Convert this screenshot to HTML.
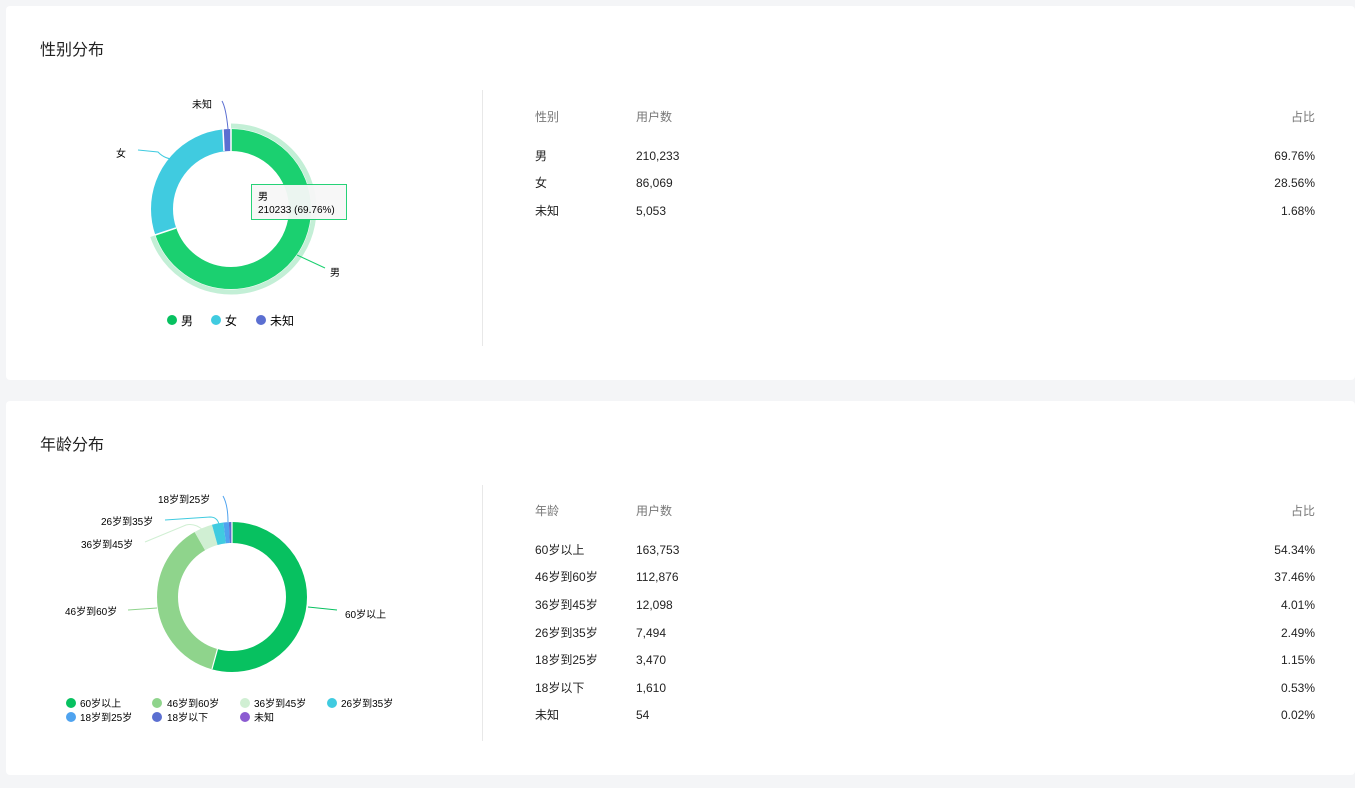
<!DOCTYPE html><html><head><meta charset="utf-8"><style>
body{margin:0;background:#f4f5f7;font-family:"Liberation Sans","Noto Sans CJK SC",sans-serif;width:1355px;height:788px;overflow:hidden;position:relative;color:#222}
.card{position:absolute;left:6px;width:1349px;background:#fff;border-radius:4px}
.t{position:absolute;font-size:12px;white-space:nowrap;line-height:16px;height:16px}
.h{color:#777}
.r{text-align:right}
.ttl{position:absolute;left:34px;font-size:16px;color:#222;line-height:22px}
.div{position:absolute;left:476px;width:1px;background:#e8e8e8}
svg{position:absolute;left:0;top:0}
</style></head><body>
<div class="card" style="top:6px;height:374px">
<div class="ttl" style="top:34px">性别分布</div>
<div class="div" style="top:84px;height:256px"></div>
</div>
<div class="card" style="top:401px;height:374px">
<div class="ttl" style="top:34px">年龄分布</div>
<div class="div" style="top:84px;height:256px"></div>
</div>
<svg width="1355" height="788" font-family="Liberation Sans, Noto Sans CJK SC, sans-serif">
<g transform="rotate(-90 231 209)" fill="none">
<circle cx="231" cy="209" r="83" stroke="#c3efd6" stroke-width="5" pathLength="100" stroke-dasharray="69.76 100"/>
<circle cx="231" cy="209" r="69" stroke="#1bd070" stroke-width="22" pathLength="100" stroke-dasharray="69.76 100"/>
<circle cx="231" cy="209" r="69" stroke="#40cbe0" stroke-width="22" pathLength="100" stroke-dasharray="0 69.76 28.56 100"/>
<circle cx="231" cy="209" r="69" stroke="#5b6fd1" stroke-width="22" pathLength="100" stroke-dasharray="0 98.32 1.68 100"/>
</g>
<path d="M231 129 V151 M223 129 L224 151 M176 228 L155 235" stroke="#fff" stroke-width="1.5"/>
<path d="M195 155 Q170 165 158 152 L138 150" stroke="#40cbe0" fill="none"/>
<path d="M228 129 Q226 108 222 101" stroke="#5b6fd1" fill="none"/>
<path d="M297 255 L325 268" stroke="#1bd070" fill="none"/>
<text x="192" y="108" font-size="10">未知</text>
<text x="116" y="157" font-size="10">女</text>
<text x="330" y="276" font-size="10">男</text>
<rect x="251.5" y="184.5" width="95" height="35" fill="#f7f7f7" stroke="#1bd070" opacity=".95"/>
<text x="258" y="200" font-size="10">男</text>
<text x="258" y="213" font-size="10">210233 (69.76%)</text>
<circle cx="172" cy="320" r="5" fill="#07c160"/><text x="181" y="325" font-size="12">男</text>
<circle cx="216" cy="320" r="5" fill="#40cbe0"/><text x="225" y="325" font-size="12">女</text>
<circle cx="261" cy="320" r="5" fill="#5b6fd1"/><text x="270" y="325" font-size="12">未知</text>

<g transform="rotate(-90 232 597)" fill="none" stroke-width="21">
<circle cx="232" cy="597" r="64.5" stroke="#07c160" pathLength="100" stroke-dasharray="54.34 100"/>
<circle cx="232" cy="597" r="64.5" stroke="#8fd48c" pathLength="100" stroke-dasharray="0 54.34 37.46 100"/>
<circle cx="232" cy="597" r="64.5" stroke="#d0efd3" pathLength="100" stroke-dasharray="0 91.8 4.01 100"/>
<circle cx="232" cy="597" r="64.5" stroke="#40cbe0" pathLength="100" stroke-dasharray="0 95.81 2.49 100"/>
<circle cx="232" cy="597" r="64.5" stroke="#4fa3ef" pathLength="100" stroke-dasharray="0 98.3 1.15 100"/>
<circle cx="232" cy="597" r="64.5" stroke="#5b6fd1" pathLength="100" stroke-dasharray="0 99.45 0.55 100"/>
</g>
<path d="M232 522 V544 M217.5 649 L212 669" stroke="#fff" stroke-width="1.2"/>
<path d="M308 607 L337 610" stroke="#07c160" fill="none"/>
<path d="M157 608 L128 610" stroke="#8fd48c" fill="none"/>
<path d="M203 530 Q195 523 186 525 L145 542" stroke="#d0efd3" fill="none"/>
<path d="M219 524 Q217 517 210 517 L165 520" stroke="#40cbe0" fill="none"/>
<path d="M228 522 Q228 505 223 496" stroke="#4fa3ef" fill="none"/>
<g font-size="10">
<text x="158" y="503">18岁到25岁</text>
<text x="101" y="525">26岁到35岁</text>
<text x="81" y="548">36岁到45岁</text>
<text x="65" y="615">46岁到60岁</text>
<text x="345" y="618">60岁以上</text>
<circle cx="71" cy="703" r="5" fill="#07c160"/><text x="80" y="707">60岁以上</text>
<circle cx="157" cy="703" r="5" fill="#8fd48c"/><text x="167" y="707">46岁到60岁</text>
<circle cx="245" cy="703" r="5" fill="#d0efd3"/><text x="254" y="707">36岁到45岁</text>
<circle cx="332" cy="703" r="5" fill="#40cbe0"/><text x="341" y="707">26岁到35岁</text>
<circle cx="71" cy="717" r="5" fill="#4fa3ef"/><text x="80" y="721">18岁到25岁</text>
<circle cx="157" cy="717" r="5" fill="#5b6fd1"/><text x="167" y="721">18岁以下</text>
<circle cx="245" cy="717" r="5" fill="#8b5bd1"/><text x="254" y="721">未知</text>
</g>
</svg>

<div class="t h" style="left:535px;top:109px">性别</div><div class="t h" style="left:636px;top:109px">用户数</div><div class="t h r" style="right:40px;top:109px">占比</div>
<div class="t" style="left:535px;top:148px">男</div><div class="t" style="left:636px;top:148px">210,233</div><div class="t r" style="right:40px;top:148px">69.76%</div>
<div class="t" style="left:535px;top:175px">女</div><div class="t" style="left:636px;top:175px">86,069</div><div class="t r" style="right:40px;top:175px">28.56%</div>
<div class="t" style="left:535px;top:203px">未知</div><div class="t" style="left:636px;top:203px">5,053</div><div class="t r" style="right:40px;top:203px">1.68%</div>

<div class="t h" style="left:535px;top:503px">年龄</div><div class="t h" style="left:636px;top:503px">用户数</div><div class="t h r" style="right:40px;top:503px">占比</div>
<div class="t" style="left:535px;top:542px">60岁以上</div><div class="t" style="left:636px;top:542px">163,753</div><div class="t r" style="right:40px;top:542px">54.34%</div>
<div class="t" style="left:535px;top:569px">46岁到60岁</div><div class="t" style="left:636px;top:569px">112,876</div><div class="t r" style="right:40px;top:569px">37.46%</div>
<div class="t" style="left:535px;top:597px">36岁到45岁</div><div class="t" style="left:636px;top:597px">12,098</div><div class="t r" style="right:40px;top:597px">4.01%</div>
<div class="t" style="left:535px;top:625px">26岁到35岁</div><div class="t" style="left:636px;top:625px">7,494</div><div class="t r" style="right:40px;top:625px">2.49%</div>
<div class="t" style="left:535px;top:652px">18岁到25岁</div><div class="t" style="left:636px;top:652px">3,470</div><div class="t r" style="right:40px;top:652px">1.15%</div>
<div class="t" style="left:535px;top:680px">18岁以下</div><div class="t" style="left:636px;top:680px">1,610</div><div class="t r" style="right:40px;top:680px">0.53%</div>
<div class="t" style="left:535px;top:707px">未知</div><div class="t" style="left:636px;top:707px">54</div><div class="t r" style="right:40px;top:707px">0.02%</div>
</body></html>
